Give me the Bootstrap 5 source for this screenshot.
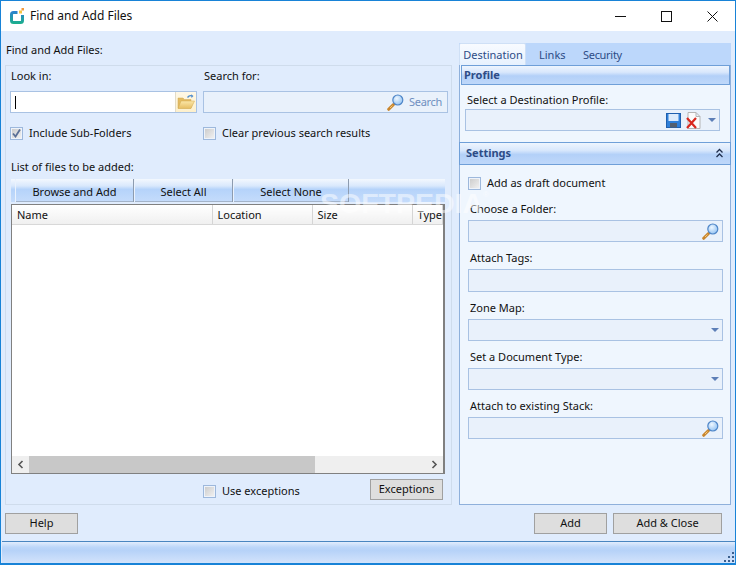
<!DOCTYPE html>
<html lang="en">
<head>
<meta charset="utf-8">
<title>Find and Add Files</title>
<link href="https://cdn.jsdelivr.net/npm/bootstrap@5.3.0/dist/css/bootstrap.min.css" rel="stylesheet">
<style>
html,body{margin:0;height:565px;overflow:hidden;background:#e0ecfd}
body{font-family:"Noto Sans","DejaVu Sans",sans-serif;font-size:11px;line-height:14px;color:#111}
.svg-defs{position:absolute;width:0;height:0}
.app-win{width:736px;height:565px;border:1px solid #1883d7;border-bottom-width:2px;background:#e0ecfd;position:relative;overflow:hidden}
.title-bar{height:30px;background:#fff;padding-left:8px;font-size:12px;color:#111}
.title-bar .app-name{margin-left:5px}
.win-ctl{width:46px;height:30px}
.main-zone{height:474px;padding:0 4px}
.left-pane{width:447px}
.pane-title{height:34px;padding:12px 1px 0}
.grp{height:440px;border:1px solid #cfdcec;padding:3px 3px 0 4px}
.lbl{display:block;height:14px;white-space:nowrap}
.lbl-in{padding-left:1px}
.lbl-top{margin-bottom:8px}
.col-look{width:193px;flex:none}
.lbl-search{padding-left:1px}
.look-row{gap:6px}
.fld{height:22px;border:1px solid #a9c2e3;background:#e9f1fb;display:flex;align-items:center;justify-content:flex-end;flex:none}
.fld-white{background:#fff;justify-content:flex-start;width:187px}
.fld-search{width:245px}
.caret-bar{width:1px;height:13px;background:#000;margin-left:4px}
.folder-btn{margin-left:auto;width:21px;height:20px;background:linear-gradient(#fff8e6,#fdf0cc);border-left:1px solid #e3dcc8;display:flex;align-items:center;justify-content:center}
.search-txt{color:#6f8fc0;margin:0 5px;letter-spacing:-.3px}
.chk{width:13px;height:13px;border:1px solid #9db8dc;background:linear-gradient(135deg,#c9c9c9,#f4f4f4);flex:none;display:flex;align-items:center;justify-content:center;box-shadow:inset 0 0 0 1px #eef3fa}
.chk-row{height:14px;gap:6px}
.chk-first{width:193px;flex:none}
.opts-row{margin-top:13px}
.list-cap{margin-top:20px}
.tool-strip{height:23px;margin:5px 0 2px 1px;width:434px;background:linear-gradient(#f3f8fe 0,#d9e8fc 30%,#b5d3fa 45%,#c5dcfb 100%);padding-left:4px}
.tool-btn{border:0;border-right:1px solid #8d9cb0;border-left:1px solid #eaf2fd;border-radius:0;padding:3px 0 0;height:23px;font-size:11px;line-height:14px;color:#111;background:transparent;box-shadow:inset 0 -1px 0 #a3b3c9}
.tb-a{width:119px}
.tb-b{width:99px}
.tb-c{width:116px}
.list-box{width:434px;height:270px;margin-left:1px;border:1px solid #808080;border-width:1px 2px 1px 1px;background:#fff;display:flex;flex-direction:column}
.list-tbl{table-layout:fixed;width:100%;margin:0;--bs-table-bg:transparent}
.list-tbl th{font-weight:400;height:19px;padding:2px 4px 0 5px;border:0;border-right:1px solid #d5d5d5;border-bottom:1px solid #d8d8d8;background:linear-gradient(#fff,#f0f0f0);font-size:11px;line-height:14px;color:#111;white-space:nowrap;overflow:hidden;vertical-align:middle}
.cw-name{width:200px}
.cw-std{width:100px}
.list-fill{flex:1}
.scroll-h{height:17px;background:#efefef;display:flex;align-items:stretch}
.scroll-arrow{width:17px;display:flex;align-items:center;justify-content:center;flex:none}
.scroll-thumb{width:286px;background:#c8c8c8}
.scroll-space{flex:1}
.plain-btn{border:1px solid #a0a0a0;border-radius:0;background:#dedede;padding:0 0 2px;font-size:11px;line-height:14px;color:#111;height:21px;--bs-btn-hover-bg:#dedede}
.bw-73{width:73px}
.bw-109{width:109px;margin-left:6px}
.excep-row{height:32px;padding:5px 5px 0 0}
.excep-chk{margin:5px 0 0 193px}
.right-pane{width:272px;margin-left:7px;margin-top:12px}
.tab-line{height:22px;background:#bcd7fb;padding-top:0;border:0;flex-wrap:nowrap}
.tab-line .nav-link{border:0;border-radius:0;padding:5px 0 0;height:22px;color:#2d4c86;font-size:11px;margin:0}
.tab-line .tab-on{background:linear-gradient(#f8fbff,#e7f1fe);color:#2d4c86;border:1px solid #cfe0f6;border-bottom:0;border-radius:2px 2px 0 0;padding:4px 0 0 1px;width:67px;text-align:center}
.tab-plain-a{margin-left:13px!important;width:33px}
.tab-plain-b{margin-left:11px!important;letter-spacing:-.3px}
.tab-body{height:440px;background:#eff6fe;border:1px solid #8fb0db;border-top:0}
.sec-bar{background:linear-gradient(#eef5fe 0,#d8e7fc 35%,#b3d0f8 55%,#bfd8fa 100%);border:1px solid #6f9fd8;color:#2d4c86;font-weight:700;font-size:11px}
.sec-a{height:20px;margin:0 0 0 1px;padding:2px 2px}
.sec-b{height:23px;padding:3px 6px;margin:0 -1px}
.prof-area{padding:8px 10px 0 5px;height:57px}
.prof-area .lbl{padding-left:2px;margin-bottom:2px}
.fld-prof{width:255px}
.ico-del{margin-left:5px}
.tri-prof{margin:0 3px 0 7px}
.set-area{padding:11px 7px 0 8px}
.set-area .lbl{padding-left:2px;margin-bottom:4px}
.chk-draft{margin-bottom:12px}
.form-gap{margin-top:9px}
.fld-tall{height:23px}
.collapse-ico{margin-top:2px}
.mag-end{margin-right:3px}
.drop-tri{width:0;height:0;border-left:4px solid transparent;border-right:4px solid transparent;border-top:4px solid #5d7fb7;margin-right:3px}
.bottom-row{height:36px;padding:8px 13px 0 4px}
.stat-bar{height:22px;border-top:1px solid #4a86c0;background:linear-gradient(#e2edfd 0,#bcd6f9 25%,#b6d2f8 40%,#d3e3fb 100%);display:flex;justify-content:flex-end;align-items:flex-end;margin-left:1px}
.wm-text{position:absolute;left:319px;top:187px;font-size:28.5px;line-height:30px;font-weight:700;color:#fff;opacity:.5;pointer-events:none;font-family:"Liberation Sans",sans-serif;white-space:nowrap}
.wm-reg{font-size:8px;vertical-align:top;line-height:14px;font-weight:400}
</style>
</head>
<body>
<svg class="svg-defs" aria-hidden="true"><defs>
<radialGradient id="glass" cx=".4" cy=".35" r=".7"><stop offset="0" stop-color="#eef7ff"/><stop offset="1" stop-color="#8fc0f2"/></radialGradient>
<linearGradient id="lg" gradientUnits="userSpaceOnUse" x1="0" y1="4" x2="0" y2="17"><stop offset="0" stop-color="#2b7fd0"/><stop offset="1" stop-color="#1bb08a"/></linearGradient>
<linearGradient id="fold" x1="0" y1="0" x2="0" y2="1"><stop offset="0" stop-color="#fbe7a8"/><stop offset="1" stop-color="#e6bd62"/></linearGradient>
<symbol id="mag" viewBox="0 0 17 17"><path d="M1.700 15.300L6.500 10.500" stroke="#c9862d" stroke-width="3" stroke-linecap="round"/><path d="M3 14l2.500-2.500" stroke="#f3c777" stroke-width="1"/><circle cx="10.800" cy="6" r="5" fill="url(#glass)" stroke="#4f86c8" stroke-width="1.200"/></symbol>
</defs></svg>
<div class="app-win">
  <div class="title-bar d-flex align-items-center">
    <svg width="16" height="18" viewBox="0 0 16 18"><path d="M8.500 5.500H4.500Q2.500 5.500 2.500 7.500v6q0 2 2 2h7q2 0 2-2V8" fill="none" stroke="url(#lg)" stroke-width="3"/><rect x="10" y="3.500" width="3" height="3" fill="#f5c542"/><rect x="12.500" y="1" width="2.500" height="2.500" fill="#f49a3c"/></svg>
    <span class="app-name">Find and Add Files</span>
    <div class="ms-auto d-flex">
      <div class="win-ctl d-flex align-items-center justify-content-center"><svg width="11" height="11"><path d="M0 5.500H11" stroke="#111"/></svg></div>
      <div class="win-ctl d-flex align-items-center justify-content-center"><svg width="11" height="11"><rect x=".5" y=".5" width="10" height="10" fill="none" stroke="#111"/></svg></div>
      <div class="win-ctl d-flex align-items-center justify-content-center"><svg width="11" height="11"><path d="M.5.5l10 10M10.500.5l-10 10" stroke="#111"/></svg></div>
    </div>
  </div>
  <div class="main-zone d-flex">
    <div class="left-pane">
      <div class="pane-title">Find and Add Files:</div>
      <div class="grp">
        <div class="d-flex">
          <div class="col-look"><span class="lbl lbl-in lbl-top">Look in:</span></div>
          <div><span class="lbl lbl-search lbl-top">Search for:</span></div>
        </div>
        <div class="d-flex look-row">
          <div class="fld fld-white"><span class="caret-bar"></span>
            <div class="folder-btn"><svg width="18" height="16" viewBox="0 0 18 16"><path d="M1 4h5l1.500 1.500H14V14H1z" fill="#e3bb62" stroke="#cda955" stroke-width=".5"/><path d="M1 14.500l3-7.500h13.500l-3.500 7.500z" fill="url(#fold)" stroke="#d0a94f" stroke-width=".5"/><path d="M10.500 3.500q2-2.800 4.500-1.500" fill="none" stroke="#4f8ccc" stroke-width="1.300"/><path d="M14 .3l2.500 1.800-2 1.800z" fill="#4f8ccc"/></svg></div>
          </div>
          <div class="fld fld-search">
            <svg width="17" height="17"><use href="#mag"/></svg>
            <span class="search-txt">Search</span>
          </div>
        </div>
        <div class="d-flex opts-row">
          <div class="d-flex align-items-center chk-row chk-first"><span class="chk"><svg width="9" height="9" viewBox="0 0 9 9"><path d="M1 4.500l2.500 3L8 .5" fill="none" stroke="#5a6f96" stroke-width="1.800"/></svg></span><span>Include Sub-Folders</span></div>
          <div class="d-flex align-items-center chk-row"><span class="chk"></span><span>Clear previous search results</span></div>
        </div>
        <span class="lbl lbl-in list-cap">List of files to be added:</span>
        <div class="tool-strip d-flex">
          <button class="btn tool-btn tb-a">Browse and Add</button>
          <button class="btn tool-btn tb-b">Select All</button>
          <button class="btn tool-btn tb-c">Select None</button>
        </div>
        <div class="list-box">
          <table class="table list-tbl">
            <thead><tr><th class="cw-name">Name</th><th class="cw-std">Location</th><th class="cw-std">Size</th><th>Type</th></tr></thead>
          </table>
          <div class="list-fill"></div>
          <div class="scroll-h">
            <div class="scroll-arrow"><svg width="7" height="9"><path d="M5.500 1L2 4.500 5.500 8" fill="none" stroke="#555" stroke-width="1.600"/></svg></div>
            <div class="scroll-thumb"></div>
            <div class="scroll-space"></div>
            <div class="scroll-arrow"><svg width="7" height="9"><path d="M1.500 1L5 4.500 1.500 8" fill="none" stroke="#555" stroke-width="1.600"/></svg></div>
          </div>
        </div>
        <div class="excep-row d-flex">
          <div class="d-flex align-items-center chk-row excep-chk"><span class="chk"></span><span>Use exceptions</span></div>
          <button class="btn plain-btn ms-auto bw-73">Exceptions</button>
        </div>
      </div>
    </div>
    <div class="right-pane">
      <ul class="nav nav-tabs tab-line">
        <li class="nav-item"><a class="nav-link tab-on" href="#">Destination</a></li>
        <li class="nav-item"><a class="nav-link tab-plain-a" href="#">Links</a></li>
        <li class="nav-item"><a class="nav-link tab-plain-b" href="#">Security</a></li>
      </ul>
      <div class="tab-body">
        <div class="sec-bar sec-a">Profile</div>
        <div class="prof-area">
          <span class="lbl">Select a Destination Profile:</span>
          <div class="fld fld-prof">
            <svg width="15" height="15" viewBox="0 0 15 15"><rect x=".5" y=".5" width="14" height="14" fill="#2f7fd8" stroke="#1e5fae"/><rect x="2.500" y="1" width="10" height="7" fill="#dcebfb"/><rect x="4" y="10" width="7" height="4.500" fill="#54606e"/></svg>
            <svg class="ico-del" width="15" height="17" viewBox="0 0 15 17"><path d="M2 .5h8l4 4v12H2zM10 .5v4h4" fill="#fbfbfb" stroke="#b5b5b5"/><path d="M1 6l9 10M10 6L1 16" stroke="#d8281e" stroke-width="2.200"/></svg>
            <span class="drop-tri tri-prof"></span>
          </div>
        </div>
        <div class="sec-bar sec-b d-flex justify-content-between"><span>Settings</span>
          <svg class="collapse-ico" width="9" height="10" viewBox="0 0 9 10"><path d="M1.500 4.500l3-3 3 3M1.500 9l3-3 3 3" fill="none" stroke="#1f2f4f" stroke-width="1.300"/></svg></div>
        <div class="set-area">
          <div class="d-flex align-items-center chk-row chk-draft"><span class="chk"></span><span>Add as draft document</span></div>
          <span class="lbl">Choose a Folder:</span>
          <div class="fld"><svg class="mag-end" width="17" height="17"><use href="#mag"/></svg></div>
          <span class="lbl form-gap">Attach Tags:</span>
          <div class="fld fld-tall"></div>
          <span class="lbl form-gap">Zone Map:</span>
          <div class="fld"><span class="drop-tri"></span></div>
          <span class="lbl form-gap">Set a Document Type:</span>
          <div class="fld"><span class="drop-tri"></span></div>
          <span class="lbl form-gap">Attach to existing Stack:</span>
          <div class="fld"><svg class="mag-end" width="17" height="17"><use href="#mag"/></svg></div>
        </div>
      </div>
    </div>
  </div>
  <div class="bottom-row d-flex">
    <button class="btn plain-btn bw-73">Help</button>
    <button class="btn plain-btn ms-auto bw-73">Add</button>
    <button class="btn plain-btn bw-109">Add &amp; Close</button>
  </div>
  <div class="stat-bar"><svg width="12" height="12" viewBox="0 0 12 12" fill="#3a5f8f"><rect x="9" y="1" width="2" height="2"/><rect x="5" y="5" width="2" height="2"/><rect x="9" y="5" width="2" height="2"/><rect x="1" y="9" width="2" height="2"/><rect x="5" y="9" width="2" height="2"/><rect x="9" y="9" width="2" height="2"/></svg></div>
  <div class="wm-text">SOFTPEDIA<span class="wm-reg">®</span></div>
</div>
<script src="https://cdn.jsdelivr.net/npm/bootstrap@5.3.0/dist/js/bootstrap.bundle.min.js"></script>
</body>
</html>
